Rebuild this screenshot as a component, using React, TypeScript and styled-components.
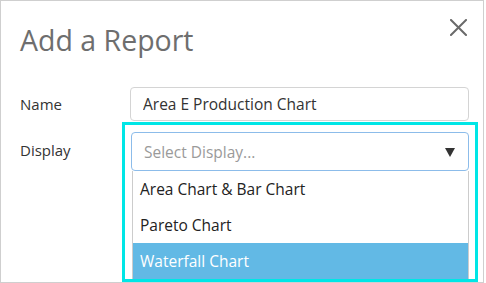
import React from 'react';
import styled, { createGlobalStyle } from 'styled-components';

const GlobalStyle = createGlobalStyle`
    html, body {
        margin: 0;
        padding: 0;
        background: #ffffff;
    }
    body {
        font-family: 'Open Sans', 'Noto Sans', sans-serif;
    }
`;

const OPTIONS = ['Area Chart & Bar Chart', 'Pareto Chart', 'Waterfall Chart'];
const SELECTED = 'Waterfall Chart';

const App = (): JSX.Element => {
    return (
        <>
            <GlobalStyle />
            <SDialog>
                <SHeader>
                    <STitle>Add a Report</STitle>
                    <SClose type='button' aria-label='Close'>
                        <svg width='17' height='17' viewBox='0 0 17 17'>
                            <path d='M1 1 L16 16 M16 1 L1 16' stroke='#6a6a6a' strokeWidth='2' strokeLinecap='square' />
                        </svg>
                    </SClose>
                </SHeader>
                <SForm>
                    <SLabel>Name</SLabel>
                    <SInput defaultValue='Area E Production Chart' />
                    <SLabel>Display</SLabel>
                    <SHighlight>
                        <SSelect>
                            <SPlaceholder>Select Display...</SPlaceholder>
                            <SArrow />
                        </SSelect>
                        <SList>
                            {OPTIONS.map((opt) => (
                                <SOption key={opt} active={opt === SELECTED}>{opt}</SOption>
                            ))}
                        </SList>
                    </SHighlight>
                </SForm>
            </SDialog>
        </>
    );
};

const FIELD_FONT = '15.5px';

const SDialog = styled.div`
    width: 484px;
    height: 283px;
    box-sizing: border-box;
    border: 1px solid #cfcfcf;
    background: #ffffff;
    overflow: hidden;
`;

const SHeader = styled.div`
    display: flex;
    justify-content: space-between;
    align-items: flex-start;
    padding: 0 16px 0 19px;
    height: 86px;
`;

const STitle = styled.h2`
    margin: 21px 0 0 0;
    font-size: 28.5px;
    line-height: 36px;
    font-weight: 400;
    color: #6e6e6e;
`;

const SClose = styled.button`
    margin-top: 18px;
    padding: 0;
    border: none;
    background: transparent;
    width: 17px;
    height: 17px;
    cursor: pointer;
    svg {
        display: block;
    }
`;

const SForm = styled.div`
    display: grid;
    grid-template-columns: 102px 356px;
    row-gap: 1px;
    padding-left: 19px;
    align-items: start;
`;

const SLabel = styled.label`
    font-size: 15px;
    color: #333333;
    line-height: 34px;
    &:nth-of-type(2) {
        margin-top: 11px;
    }
`;

const SInput = styled.input`
    margin-left: 8px;
    width: 339px;
    height: 34px;
    box-sizing: border-box;
    border: 1px solid #d4d4d4;
    border-radius: 4px;
    padding: 0 12px;
    font-family: 'Open Sans', 'Noto Sans', sans-serif;
    font-size: ${FIELD_FONT};
    color: #333333;
    outline: none;
`;

const SHighlight = styled.div`
    border: 3px solid #00e6e6;
    padding: 7px 6px 0 6px;
    height: 160px;
    box-sizing: border-box;
    overflow: hidden;
`;

const SSelect = styled.div`
    display: flex;
    align-items: center;
    justify-content: space-between;
    height: 39px;
    box-sizing: border-box;
    border: 1px solid #8cbcea;
    border-radius: 4px;
    padding: 0 13px 0 12px;
`;

const SPlaceholder = styled.span`
    font-size: ${FIELD_FONT};
    color: #9a9a9a;
`;

const SArrow = styled.span`
    width: 0;
    height: 0;
    border-left: 5.5px solid transparent;
    border-right: 5.5px solid transparent;
    border-top: 9px solid #333333;
    margin-top: 1px;
`;

const SList = styled.div`
    margin: 0 0 0 1px;
    border-left: 1px solid #cccccc;
    border-right: 1px solid #cccccc;
`;

const SOption = styled.div<{ active?: boolean }>`
    height: 36px;
    line-height: 36px;
    padding-left: 7px;
    font-size: ${FIELD_FONT};
    color: ${(p) => (p.active ? '#ffffff' : '#222222')};
    background: ${(p) => (p.active ? '#62b9e5' : '#ffffff')};
`;

export default App;
